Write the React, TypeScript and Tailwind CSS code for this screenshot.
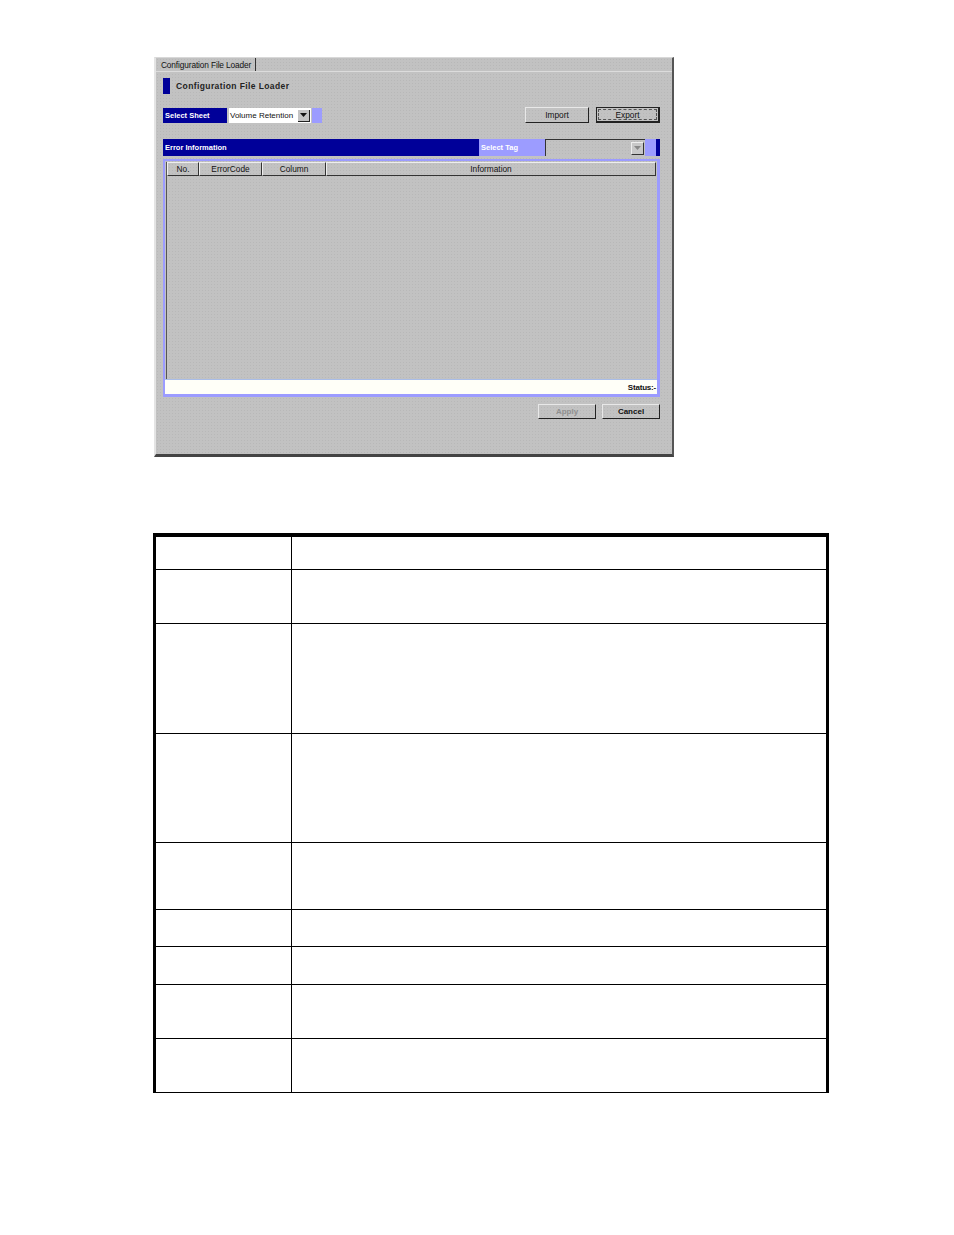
import React from 'react';

const dither =
  'bg-[#c2c2c2] bg-[radial-gradient(#b8b8b8_0.8px,transparent_0.9px)] bg-[length:3px_3px]';

const Btn: React.FC<{ label: string; className?: string; labelClass?: string }> = ({ label, className = '', labelClass = '' }) => (
  <div className={`flex items-center justify-center border border-t-[#e8e8e8] border-l-[#e8e8e8] border-r-[#222] border-b-[#222] ${className}`}>
    <span className={labelClass}>{label}</span>
  </div>
);

const columns = [
  { label: 'No.', w: 'w-[32px]' },
  { label: 'ErrorCode', w: 'w-[63px]' },
  { label: 'Column', w: 'w-[64px]' },
  { label: 'Information', w: 'flex-1' },
];

const rowHeights = ['h-[33px]', 'h-[54px]', 'h-[110px]', 'h-[109px]', 'h-[67px]', 'h-[37px]', 'h-[38px]', 'h-[54px]', 'h-[54px]'];

const ConfigWindow: React.FC = () => (
  <div className={`w-[520px] h-[400px] ml-[154px] flex flex-col border-l-2 border-t border-r-2 border-b-[3px] border-l-[#e4e4e4] border-t-[#d8d8d8] border-r-[#555] border-b-[#444] text-[#111] text-[8.3px] leading-none ${dither}`}>
    {/* tab strip */}
    <div className="h-[14px] flex border-b border-[#dcdcdc]">
      <div className="pl-[5px] pr-[4px] pt-[2px] flex items-center border-r border-[#333] text-[8.3px] tracking-[-0.12px]">Configuration File Loader</div>
    </div>

    <div className="flex-1 flex flex-col pl-[7px] pr-[12px]">
      {/* title */}
      <div className="mt-[6px] h-[16px] flex items-center">
        <div className="w-[7px] h-full bg-[#000099]" />
        <span className="ml-[6px] pt-[1px] font-bold text-[8.5px] tracking-[0.4px] text-[#222]">Configuration File Loader</span>
      </div>

      {/* sheet selector + import/export */}
      <div className="mt-[13px] h-[16px] flex items-center">
        <div className="w-[64px] h-[15px] mt-[1px] bg-[#000099] text-white font-bold flex items-center pl-[2px] text-[7.5px]">Select Sheet</div>
        <div className="ml-[2px] w-[82px] h-[15px] mt-[1px] bg-white flex items-center justify-between pl-[1px] pr-[1px]">
          <span className="text-[8px]">Volume Retention</span>
          <div className="w-[12px] h-[12px] bg-[#c4c4c4] border-r border-b border-[#222] flex items-center justify-center">
            <svg width="7" height="4" viewBox="0 0 7 4"><path d="M0 0h7L3.500 4z" fill="#111" /></svg>
          </div>
        </div>
        <div className="ml-[1px] w-[10px] h-[15px] mt-[1px] bg-[#9c9cff]" />
        <Btn label="Import" className="ml-auto w-[64px] h-[16px]" />
        <div className="ml-[7px] w-[64px] h-[16px] border border-[#222] border-r-2 border-b-2 p-[1px]">
          <div className="w-full h-full pt-[1px] border border-dashed border-[#555] flex items-center justify-center">Export</div>
        </div>
      </div>

      {/* error information bar */}
      <div className="mt-[16px] h-[17px] flex">
        <div className="w-[316px] bg-[#000099] text-white font-bold flex items-center pl-[2px] text-[7.5px]">Error Information</div>
        <div className="w-[66px] bg-[#9c9cff] text-white font-bold flex items-center pl-[2px] text-[7.5px]">Select Tag</div>
        <div className={`w-[100px] border-l border-t border-[#333] flex items-center justify-end pr-[1px] ${dither}`}>
          <div className="w-[13px] h-[13px] bg-[#c8c8c8] border border-t-[#eee] border-l-[#eee] border-r-[#333] border-b-[#333] flex items-center justify-center">
            <svg width="7" height="4" viewBox="0 0 7 4"><path d="M0 0h7L3.500 4z" fill="#888" /></svg>
          </div>
        </div>
        <div className="w-[11px] bg-[#9c9cff]" />
        <div className="w-[4px] bg-[#000099]" />
      </div>

      {/* error table */}
      <div className="mt-[3px] h-[238px] border-[2px] border-[#9c9cff] flex flex-col border-r-[3px] border-b-[3px]">
        <div className="flex-1 flex flex-col border-l border-[#555] ml-[1px] mt-[1px]">
          <div className="h-[14px] flex mr-[1px]">
            {columns.map(c => (
              <div key={c.label} className={`${c.w} flex items-center justify-center border border-t-[#eee] border-l-[#eee] border-r-[#333] border-b-[#333]`}>
                {c.label}
              </div>
            ))}
          </div>
          <div className="flex-1" />
        </div>
        <div className="h-[15px] bg-[#fffff8] border-t border-[#a9bde8] flex items-center justify-end font-bold text-[8px] tracking-[-0.2px] pt-[2px] pr-[1px]">Status:-</div>
      </div>

      {/* footer buttons */}
      <div className="mt-[7px] flex justify-end gap-[6px]">
        <Btn label="Apply" className="w-[58px] h-[15px]" labelClass="text-[#8f8f8f] font-bold text-[8px]" />
        <Btn label="Cancel" className="w-[58px] h-[15px]" labelClass="font-bold text-[8px]" />
      </div>
    </div>
  </div>
);

const ParamTable: React.FC = () => (
  <div className="mt-[76px] ml-[153px] w-[676px] border-x-[3px] border-t-4 border-black">
    {rowHeights.map((h, i) => (
      <div key={i} className={`${h} flex border-b border-black`}>
        <div className="w-[136px] border-r border-black" />
        <div className="flex-1" />
      </div>
    ))}
  </div>
);

const App: React.FC = () => (
  <div className="w-[954px] h-[1235px] bg-white pt-[57px] font-['Liberation_Sans',Arial,sans-serif]">
    <ConfigWindow />
    <ParamTable />
  </div>
);

export default App;
